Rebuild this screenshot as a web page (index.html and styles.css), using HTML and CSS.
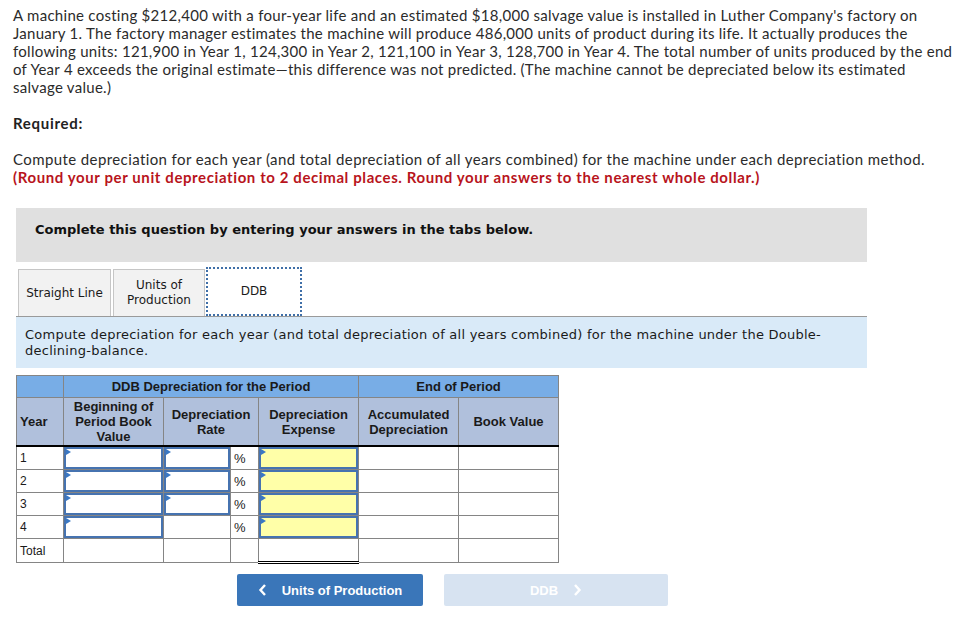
FILE: index.html
```html
<!DOCTYPE html>
<html lang="en">
<head>
    <meta charset="UTF-8">
    <title>DDB Depreciation</title>
    <link rel="stylesheet" href="styles.css">
</head>
<body>
<div class="page">
    <p class="problem">A machine costing $212,400 with a four-year life and an estimated $18,000 salvage value is installed in Luther Company's factory on January 1. The factory manager estimates the machine will produce 486,000 units of product during its life. It actually produces the following units: 121,900 in Year 1, 124,300 in Year 2, 121,100 in Year 3, 128,700 in Year 4. The total number of units produced by the end of Year 4 exceeds the original estimate&mdash;this difference was not predicted. (The machine cannot be depreciated below its estimated salvage value.)</p>

    <p class="required">Required:</p>

    <p class="task">Compute depreciation for each year (and total depreciation of all years combined) for the machine under each depreciation method.<br>
    <span class="round">(Round your per unit depreciation to 2 decimal places. Round your answers to the nearest whole dollar.)</span></p>

    <div class="notice">Complete this question by entering your answers in the tabs below.</div>

    <div class="tabs">
        <div class="tab">Straight Line</div>
        <div class="tab">Units of<br>Production</div>
        <div class="tab active">DDB</div>
    </div>

    <div class="tab-info">Compute depreciation for each year (and total depreciation of all years combined) for the machine under the Double-declining-balance.</div>

    <table class="ddb">
        <colgroup>
            <col style="width:47px">
            <col style="width:100px">
            <col style="width:67px">
            <col style="width:28px">
            <col style="width:100px">
            <col style="width:100px">
            <col style="width:100px">
        </colgroup>
        <tr class="head-top">
            <th class="blank"></th>
            <th colspan="4" class="group">DDB Depreciation for the Period</th>
            <th colspan="2" class="group">End of Period</th>
        </tr>
        <tr class="head-sub">
            <th class="year-h">Year</th>
            <th>Beginning of Period Book Value</th>
            <th colspan="2">Depreciation Rate</th>
            <th>Depreciation Expense</th>
            <th class="group">Accumulated Depreciation</th>
            <th>Book Value</th>
        </tr>
        <tr>
            <td class="year">1</td>
            <td class="cell"><div class="entry"></div></td>
            <td class="cell"><div class="entry"></div></td>
            <td class="pct">%</td>
            <td class="cell"><div class="entry calc"></div></td>
            <td></td>
            <td></td>
        </tr>
        <tr>
            <td class="year">2</td>
            <td class="cell"><div class="entry"></div></td>
            <td class="cell"><div class="entry"></div></td>
            <td class="pct">%</td>
            <td class="cell"><div class="entry calc"></div></td>
            <td></td>
            <td></td>
        </tr>
        <tr>
            <td class="year">3</td>
            <td class="cell"><div class="entry"></div></td>
            <td class="cell"><div class="entry"></div></td>
            <td class="pct">%</td>
            <td class="cell"><div class="entry calc"></div></td>
            <td></td>
            <td></td>
        </tr>
        <tr>
            <td class="year">4</td>
            <td class="cell"><div class="entry"></div></td>
            <td></td>
            <td class="pct">%</td>
            <td class="cell"><div class="entry calc"></div></td>
            <td></td>
            <td></td>
        </tr>
        <tr>
            <td class="year">Total</td>
            <td></td>
            <td></td>
            <td></td>
            <td class="total"></td>
            <td></td>
            <td></td>
        </tr>
    </table>

    <div class="nav">
        <button class="nav-btn prev" type="button">
            <svg width="10" height="14" viewBox="0 0 10 14"><path d="M7 2 L2.5 7 L7 12" fill="none" stroke="#fff" stroke-width="2.4"/></svg>
            Units of Production
        </button>
        <button class="nav-btn next" type="button">
            DDB
            <svg width="10" height="14" viewBox="0 0 10 14"><path d="M3 2 L7.5 7 L3 12" fill="none" stroke="#fff" stroke-width="2.4"/></svg>
        </button>
    </div>
</div>
</body>
</html>
```

FILE: styles.css
```css
body {
    margin: 0;
    background-color: #ffffff;
    color: #2b2b2b;
    font-family: 'Lato', 'Open Sans', sans-serif;
}
.page {
    padding: 6px 0 0 13px;
    width: 945px;
}
p {
    margin: 0;
    font-size: 15px;
    line-height: 18px;
    letter-spacing: 0.28px;
}
.problem {
    margin-bottom: 18px;
}
.required {
    font-weight: bold;
    color: #222;
    letter-spacing: 0.7px;
    margin-bottom: 18px;
}
.task {
    letter-spacing: 0.4px;
}
.round {
    color: #b8141c;
    font-weight: bold;
    letter-spacing: 0.6px;
}
.notice {
    margin: 22px 0 0 3px;
    width: 851px;
    height: 54px;
    box-sizing: border-box;
    padding: 14px 0 0 19px;
    background-color: #e0e0e0;
    font-family: 'DejaVu Sans', Verdana, sans-serif;
    font-size: 13px;
    font-weight: bold;
    color: #111;
}
.tabs {
    display: flex;
    gap: 2px;
    margin: 7px 0 0 5px;
    height: 47px;
    align-items: flex-end;
}
.tab {
    box-sizing: border-box;
    height: 47px;
    width: 93px;
    background-color: #f2f2f2;
    border: 1px solid #c6c6c6;
    border-bottom: none;
    display: flex;
    align-items: center;
    justify-content: center;
    text-align: center;
    font-family: 'DejaVu Sans', Verdana, sans-serif;
    font-size: 12px;
    line-height: 15px;
    color: #1a1a1a;
}
.tab:nth-child(2) {
    width: 92px;
}
.tab.active {
    width: 96px;
    height: 49px;
    margin-left: -1px;
    background-color: #ffffff;
    border: 2px dotted #3f6fa8;
}
.tab-info {
    margin-left: 3px;
    width: 851px;
    box-sizing: border-box;
    border-top: 1px solid #9a9a9a;
    background-color: #d9eaf8;
    padding: 10px 9px 9px;
    font-family: 'DejaVu Sans', Verdana, sans-serif;
    font-size: 13px;
    line-height: 16px;
    letter-spacing: 0.25px;
    color: #1a1a1a;
}
.ddb {
    margin: 7px 0 0 3px;
    border-collapse: collapse;
    table-layout: fixed;
    width: 542px;
    font-family: 'Liberation Sans', Arial, sans-serif;
    font-size: 13px;
    color: #1a1a1a;
}
.ddb th,
.ddb td {
    border: 1px solid #858585;
    padding: 0;
}
.head-top th {
    height: 21px;
    background-color: #78ade6;
    font-weight: bold;
}
.head-sub th {
    height: 47px;
    background-color: #b0c0dc;
    font-weight: bold;
    line-height: 15px;
    border-bottom: 2px solid #000;
}
.ddb th.group {
    border-left: 1px solid #000;
}
.head-top th:nth-child(2),
.head-sub th:nth-child(2) {
    border-left: 1px solid #000;
}
.ddb .year-h {
    text-align: left;
    padding-left: 3px;
}
.ddb td {
    height: 22px;
}
.ddb td.year {
    padding-left: 3px;
    font-size: 12px;
}
.ddb td.cell {
    padding: 0;
    vertical-align: top;
}
.entry {
    position: relative;
    box-sizing: border-box;
    height: 22px;
    border: 2px solid #4673b0;
    background-color: #ffffff;
}
.entry::before {
    content: '';
    position: absolute;
    top: 0;
    left: 0;
    border-top: 3px solid transparent;
    border-bottom: 3px solid transparent;
    border-left: 5px solid #3a78c4;
}
.entry.calc {
    background-color: #ffffa8;
}
.ddb td.pct {
    padding-left: 3px;
    font-size: 13px;
}
.ddb td.total {
    border-top: 1px solid #000;
    border-bottom: 3px double #000;
}
.nav {
    display: flex;
    gap: 21px;
    margin: 10px 0 0 224px;
}
.nav-btn {
    height: 32px;
    border: none;
    border-radius: 2px;
    font-family: 'Liberation Sans', Arial, sans-serif;
    font-size: 13px;
    font-weight: bold;
    color: #ffffff;
    display: flex;
    align-items: center;
    justify-content: center;
    gap: 14px;
    padding: 0;
}
.prev {
    width: 186px;
    background-color: #3a76b9;
}
.next {
    width: 224px;
    background-color: #d7e3f1;
}
```
